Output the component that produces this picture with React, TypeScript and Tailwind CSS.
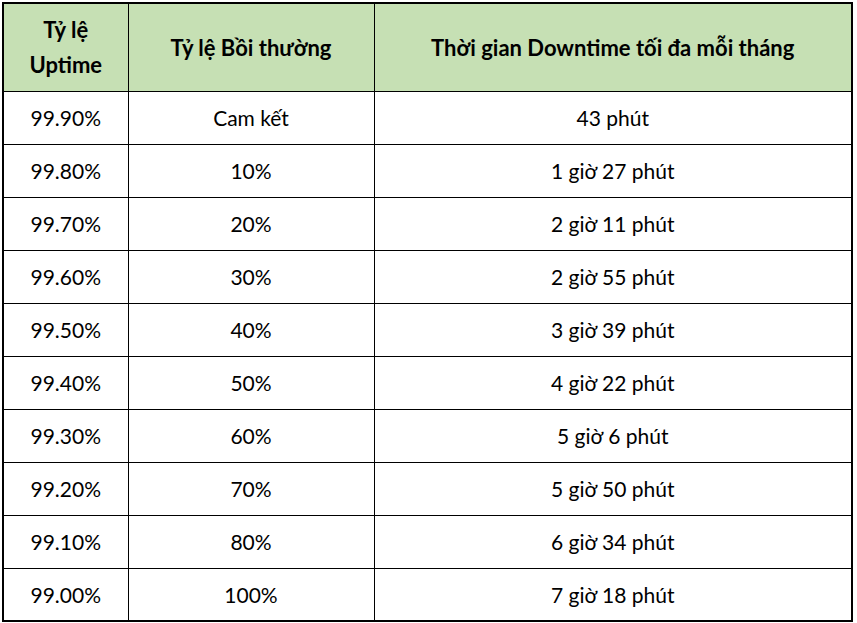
const rows: [string, string, string][] = [
  ["99.90%", "Cam kết", "43 phút"],
  ["99.80%", "10%", "1 giờ 27 phút"],
  ["99.70%", "20%", "2 giờ 11 phút"],
  ["99.60%", "30%", "2 giờ 55 phút"],
  ["99.50%", "40%", "3 giờ 39 phút"],
  ["99.40%", "50%", "4 giờ 22 phút"],
  ["99.30%", "60%", "5 giờ 6 phút"],
  ["99.20%", "70%", "5 giờ 50 phút"],
  ["99.10%", "80%", "6 giờ 34 phút"],
  ["99.00%", "100%", "7 giờ 18 phút"],
];

export default function App() {
  return (
    <div className="w-[857px] h-[623px] bg-white pt-[2px] pl-[2px] font-['Lato','Noto_Sans',sans-serif] text-black">
      <table className="border-collapse table-fixed w-[851px] border-2 border-black">
        <colgroup>
          <col className="w-[125px]" />
          <col className="w-[246px]" />
          <col />
        </colgroup>
        <thead>
          <tr className="h-[88px] bg-[#c6e0b4] text-[22px] font-bold leading-[35px]">
            <th className="border border-black text-center">
              Tỷ lệ
              <br />
              Uptime
            </th>
            <th className="border border-black text-center">Tỷ lệ Bồi thường</th>
            <th className="border border-black text-center">Thời gian Downtime tối đa mỗi tháng</th>
          </tr>
        </thead>
        <tbody>
          {rows.map((r) => (
            <tr key={r[0]} className="h-[53px] text-[21px]">
              <td className="border border-black text-center">{r[0]}</td>
              <td className="border border-black text-center">{r[1]}</td>
              <td className="border border-black text-center">{r[2]}</td>
            </tr>
          ))}
        </tbody>
      </table>
    </div>
  );
}
